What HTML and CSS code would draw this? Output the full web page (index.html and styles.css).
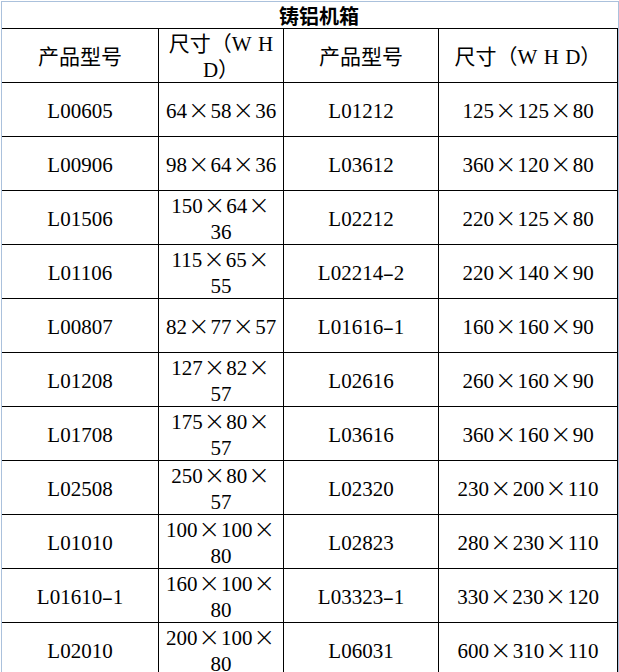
FILE: index.html
```html
<!DOCTYPE html>
<html lang="zh">
<head>
<meta charset="utf-8">
<title>铸铝机箱</title>
<link rel="stylesheet" href="styles.css">
</head>
<body>
<div class="page">
  <div class="title">铸铝机箱</div>
  <div class="grid">
    <div class="cell"><span class="t">产品型号</span></div>
    <div class="cell"><span class="t">尺寸（W<span class="sp"> </span>H<br>D）</span></div>
    <div class="cell"><span class="t">产品型号</span></div>
    <div class="cell"><span class="t">尺寸（W<span class="sp"> </span>H<span class="sp"> </span>D）</span></div>

    <div class="cell"><span class="t">L00605</span></div>
    <div class="cell"><span class="t">64<span class="x">×</span>58<span class="x">×</span>36</span></div>
    <div class="cell"><span class="t">L01212</span></div>
    <div class="cell"><span class="t">125<span class="x">×</span>125<span class="x">×</span>80</span></div>

    <div class="cell"><span class="t">L00906</span></div>
    <div class="cell"><span class="t">98<span class="x">×</span>64<span class="x">×</span>36</span></div>
    <div class="cell"><span class="t">L03612</span></div>
    <div class="cell"><span class="t">360<span class="x">×</span>120<span class="x">×</span>80</span></div>

    <div class="cell"><span class="t">L01506</span></div>
    <div class="cell"><span class="t">150<span class="x">×</span>64<span class="x">×</span><br>36</span></div>
    <div class="cell"><span class="t">L02212</span></div>
    <div class="cell"><span class="t">220<span class="x">×</span>125<span class="x">×</span>80</span></div>

    <div class="cell"><span class="t">L01106</span></div>
    <div class="cell"><span class="t">115<span class="x">×</span>65<span class="x">×</span><br>55</span></div>
    <div class="cell"><span class="t">L02214<span class="dash">-</span>2</span></div>
    <div class="cell"><span class="t">220<span class="x">×</span>140<span class="x">×</span>90</span></div>

    <div class="cell"><span class="t">L00807</span></div>
    <div class="cell"><span class="t">82<span class="x">×</span>77<span class="x">×</span>57</span></div>
    <div class="cell"><span class="t">L01616<span class="dash">-</span>1</span></div>
    <div class="cell"><span class="t">160<span class="x">×</span>160<span class="x">×</span>90</span></div>

    <div class="cell"><span class="t">L01208</span></div>
    <div class="cell"><span class="t">127<span class="x">×</span>82<span class="x">×</span><br>57</span></div>
    <div class="cell"><span class="t">L02616</span></div>
    <div class="cell"><span class="t">260<span class="x">×</span>160<span class="x">×</span>90</span></div>

    <div class="cell"><span class="t">L01708</span></div>
    <div class="cell"><span class="t">175<span class="x">×</span>80<span class="x">×</span><br>57</span></div>
    <div class="cell"><span class="t">L03616</span></div>
    <div class="cell"><span class="t">360<span class="x">×</span>160<span class="x">×</span>90</span></div>

    <div class="cell"><span class="t">L02508</span></div>
    <div class="cell"><span class="t">250<span class="x">×</span>80<span class="x">×</span><br>57</span></div>
    <div class="cell"><span class="t">L02320</span></div>
    <div class="cell"><span class="t">230<span class="x">×</span>200<span class="x">×</span>110</span></div>

    <div class="cell"><span class="t">L01010</span></div>
    <div class="cell"><span class="t">100<span class="x">×</span>100<span class="x">×</span><br>80</span></div>
    <div class="cell"><span class="t">L02823</span></div>
    <div class="cell"><span class="t">280<span class="x">×</span>230<span class="x">×</span>110</span></div>

    <div class="cell"><span class="t">L01610<span class="dash">-</span>1</span></div>
    <div class="cell"><span class="t">160<span class="x">×</span>100<span class="x">×</span><br>80</span></div>
    <div class="cell"><span class="t">L03323<span class="dash">-</span>1</span></div>
    <div class="cell"><span class="t">330<span class="x">×</span>230<span class="x">×</span>120</span></div>

    <div class="cell"><span class="t">L02010</span></div>
    <div class="cell"><span class="t">200<span class="x">×</span>100<span class="x">×</span><br>80</span></div>
    <div class="cell"><span class="t">L06031</span></div>
    <div class="cell"><span class="t">600<span class="x">×</span>310<span class="x">×</span>110</span></div>
  </div>
</div>
</body>
</html>
```
FILE: styles.css
```css
html, body {
  margin: 0;
  padding: 0;
  background: #ffffff;
}
body {
  overflow: hidden;
}
.page {
  margin-top: 1px;
  margin-left: 1px;
  width: 616px;
  border-top: 1px solid #abc1dc;
  border-left: 1px solid #abc1dc;
  border-right: 1px solid #abc1dc;
  font-family: "Liberation Serif", "Noto Sans CJK SC", serif;
  font-size: 21px;
  color: #000;
}
.title {
  height: 26px;
  display: flex;
  align-items: flex-end;
  justify-content: center;
  padding-left: 18px;
  font-family: "Noto Sans CJK SC", sans-serif;
  font-weight: bold;
  font-size: 20px;
  line-height: 24px;
}
.grid {
  display: grid;
  grid-template-columns: 156px 124px 154px 178px;
  grid-auto-rows: 53px;
  gap: 1px;
  background: #000;
  padding-top: 1px;
  padding-right: 1px;
}
.cell {
  background: #fff;
  display: flex;
  align-items: center;
  justify-content: center;
  padding-top: 2px;
}
.t {
  display: block;
  text-align: center;
  line-height: 26px;
  white-space: nowrap;
}
.x {
  display: inline-block;
  text-align: center;
  font-family: "DejaVu Sans", sans-serif;
  font-weight: 200;
  font-size: 1.25em;
  line-height: 1;
  width: 0.9em;
  vertical-align: -0.04em;
}
.dash {
  display: inline-block;
  width: 0.5em;
  text-align: center;
  transform: scaleX(1.6);
}
.sp {
  display: inline-block;
  width: 0.3em;
}
```
